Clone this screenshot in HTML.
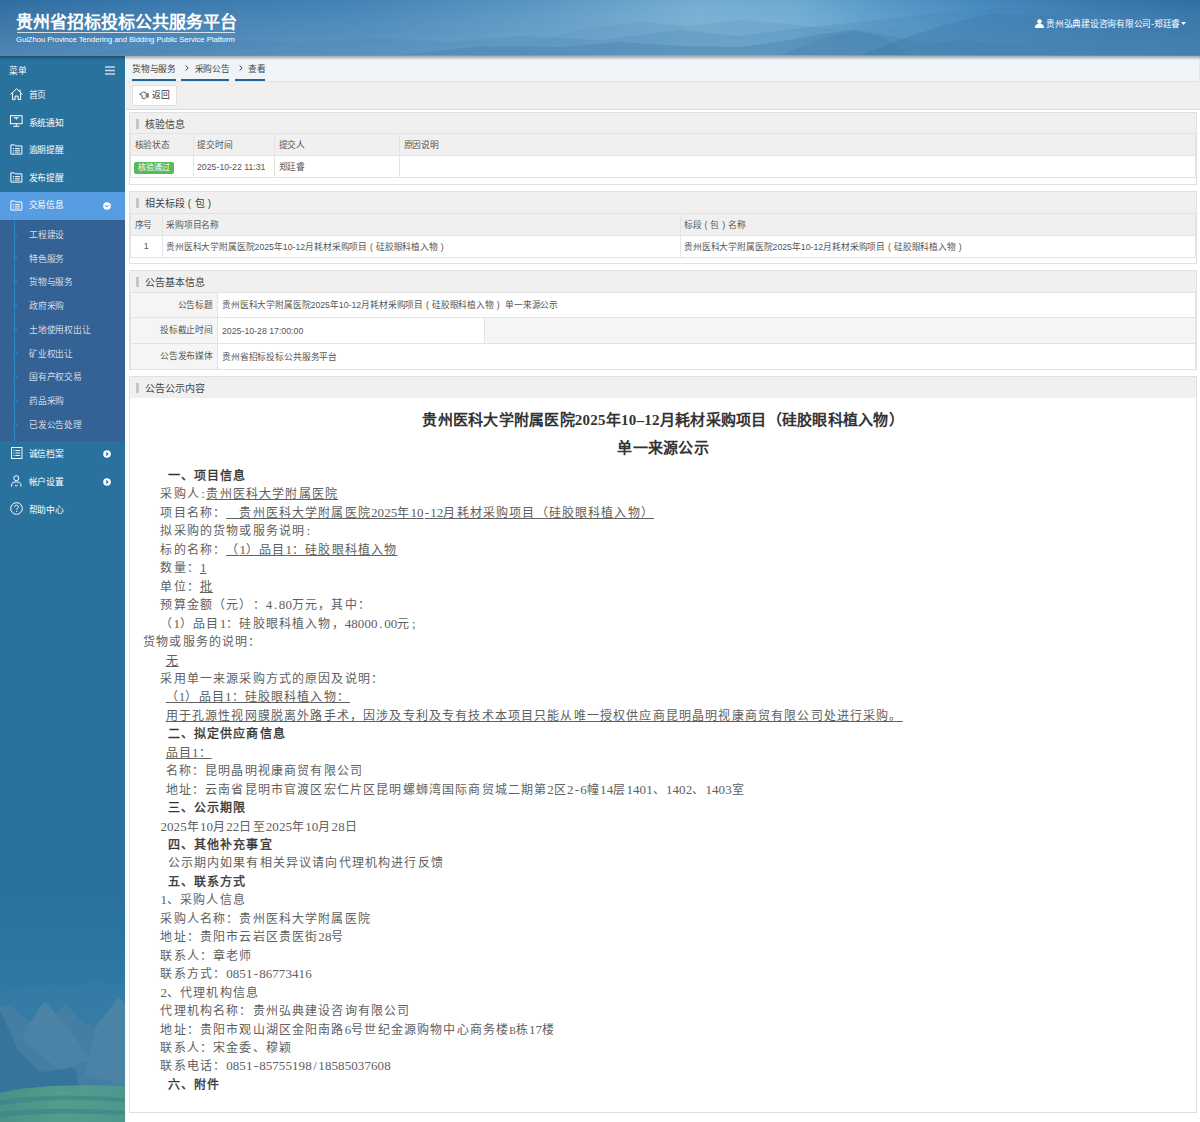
<!DOCTYPE html>
<html lang="zh-CN">
<head>
<meta charset="utf-8">
<style>
*{box-sizing:border-box;margin:0;padding:0}
html,body{width:1200px;height:1122px;overflow:hidden;background:#fff}
body{font-family:"Liberation Sans",sans-serif;font-size:8.75px;color:#333;position:relative;text-spacing-trim:space-all}
.a{position:absolute}
#hdr{left:0;top:0;width:1200px;height:56px;overflow:hidden;
 background:#3a7bb0;
 z-index:5}
#hsh{left:0;top:56px;width:1200px;height:3.5px;z-index:6;background:linear-gradient(180deg,rgba(0,0,0,.32),rgba(0,0,0,0))}
#title{left:15.5px;top:10.5px;color:#fff;font-size:17px;font-weight:bold;line-height:24px;white-space:nowrap}
#tline{left:17px;top:32px;width:218px;height:1px;background:rgba(255,255,255,.75)}
#sub{left:16px;top:34px;color:#fff;font-size:7.6px;line-height:11px;white-space:nowrap}
#user{left:1035px;top:18px;color:#fff;font-size:8.75px;letter-spacing:-.25px;line-height:13px;white-space:nowrap}
#side{left:0;top:55px;width:125px;height:1067px;background:#29729e;overflow:hidden}
.mt{position:absolute;left:28.7px;color:#fff;font-size:8.75px;letter-spacing:-.25px;line-height:11px;white-space:nowrap}
.st{position:absolute;left:29px;color:#d3dde8;font-size:8.75px;letter-spacing:-.25px;line-height:11px;white-space:nowrap}
.ic{position:absolute;left:10px}
#mainl{left:125px;top:55px;width:1px;height:1067px;background:#f7f9fb}
#crumb{left:126px;top:55px;width:1074px;height:27px;background:#eff4f8;border-bottom:1px solid #dfe4e8;border-right:1px solid #e4e8ec;border-radius:0 0 2px 0}
.cr{position:absolute;top:0;height:26px;border-bottom:2.2px solid #23679a;color:#444;font-size:8.75px;letter-spacing:-.25px;line-height:11px;padding-top:9px;white-space:nowrap}
#tool{left:126px;top:82px;width:1074px;height:28px;background:#f0f0f0;border-bottom:1px solid #dadada}
#back{left:132px;top:85px;width:45px;height:20.5px;background:#fff;border:1px solid #dedede;border-radius:2px;font-size:8.75px;line-height:11px}
.panel{position:absolute;left:129px;width:1068px;border:1px solid #e0e0e0;background:#fff}
.ph{height:20px;background:#f0f0f0;position:relative}
.ph i{position:absolute;left:6px;top:5.5px;width:3px;height:10px;background:#c6c6c6}
.ph b{position:absolute;left:14.5px;top:5.5px;font-weight:normal;font-size:10px;line-height:12px;color:#444;white-space:nowrap}
table{border-collapse:collapse;table-layout:fixed;width:100%}
td{border:1px solid #e3e3e3;height:22px;padding:1px 0 0 3.5px;font-size:8.75px;line-height:11px;color:#555;white-space:nowrap;overflow:hidden}
tr.h td{background:#f0f0f0}
.c{letter-spacing:-.15px}
.pp{display:inline-block;width:8.75px;text-align:center;letter-spacing:0}
.badge{display:inline-block;background:#5cb85c;color:#fff;border-radius:2px;width:40.5px;height:12.5px;line-height:12.5px;text-align:center;font-size:8px;letter-spacing:-.35px;vertical-align:middle;position:relative;top:1px;left:-.7px}
td.lab{background:#f5f5f5;text-align:right;padding:0 4px 0 0}
.at{position:absolute;left:129px;width:1068px;text-align:center;font-family:"Liberation Serif",serif;font-weight:bold;font-size:15px;line-height:20px;color:#333;white-space:nowrap;letter-spacing:.25px}
.ln{position:absolute;white-space:nowrap;font-size:12px;letter-spacing:1.16px;line-height:18px;color:#606060}
.ln .n{font-family:"Liberation Serif",serif;font-size:13px;letter-spacing:.08px}
.ln u{text-decoration:underline;text-underline-offset:1px;text-decoration-thickness:1px}
.ln.bd{color:#333;-webkit-text-stroke:.35px #333}
</style>
</head>
<body>
<div id="hdr" class="a">
<svg class="a" style="left:0;top:0" width="1200" height="56" viewBox="0 0 1200 56" preserveAspectRatio="none"><defs><linearGradient id="hg" x1="0" y1="0" x2="1" y2="0"><stop offset="0" stop-color="#2f6ca0"/><stop offset=".12" stop-color="#3777ac"/><stop offset=".3" stop-color="#4383b6"/><stop offset=".45" stop-color="#5a96c2"/><stop offset=".58" stop-color="#74acd0"/><stop offset=".66" stop-color="#6eaad0"/><stop offset=".73" stop-color="#5699c8"/><stop offset=".82" stop-color="#4387bd"/><stop offset=".92" stop-color="#3677ad"/><stop offset="1" stop-color="#2f6ea3"/></linearGradient><linearGradient id="hz" x1="0" y1="0" x2="0" y2="1"><stop offset="0" stop-color="#fff" stop-opacity="0"/><stop offset=".55" stop-color="#cfe3f0" stop-opacity=".12"/><stop offset="1" stop-color="#cfe3f0" stop-opacity=".22"/></linearGradient></defs><rect width="1200" height="56" fill="url(#hg)"/><rect width="1200" height="56" fill="url(#hz)"/><path d="M470 56 L530 42 L590 28 L640 22 L690 26 L740 20 L790 24 L840 30 L880 26 L930 34 L980 30 L1030 38 V56Z" fill="#5f94ba" opacity=".28"/><path d="M80 55 L160 44 L240 40 L300 43 L380 38 L450 42 L520 36 L600 40 L680 30 L740 36 L800 28 L860 22 L930 14 L1000 8 L1060 10 L1120 4 L1200 10 V55Z" fill="#3f7fb2" opacity=".22"/><path d="M400 55 L480 46 L560 47 L620 42 L680 46 L740 47 L790 40 L820 34 L855 30 L890 36 L930 44 L960 40 L1000 44 L1060 42 L1120 46 L1200 44 V55Z" fill="#4a84b0" opacity=".45"/><path d="M780 55 L830 36 L856 31 L880 36 L910 55Z" fill="#4d86b2" opacity=".55"/><path d="M860 55 L900 40 L940 26 L990 14 L1050 16 L1120 24 L1200 20 V55Z" fill="#3a78ad" opacity=".35"/></svg>
<div id="title" class="a">贵州省招标投标公共服务平台</div>
<div id="tline" class="a"></div>
<div id="sub" class="a">GuiZhou Province Tendering and Bidding Public Service Platform</div>
<div id="user" class="a"><svg width="9" height="9" viewBox="0 0 9 9" style="vertical-align:-1px"><circle cx="4.5" cy="2.6" r="2.3" fill="#fff"/><path d="M0 9 C0 5.5 2 4.8 4.5 4.8 C7 4.8 9 5.5 9 9Z" fill="#fff"/></svg> 贵州弘典建设咨询有限公司-郑廷睿<svg width="5" height="4" viewBox="0 0 5 4" style="vertical-align:1px;margin-left:1px"><path d="M0 0H5L2.5 3Z" fill="#fff"/></svg></div>
</div><div id="hsh" class="a"></div>
<div id="side" class="a">
<svg class="a" style="left:0;top:845px" width="125" height="222" viewBox="0 0 125 222"><defs><linearGradient id="sk" x1="0" y1="0" x2="0" y2="1"><stop offset="0" stop-color="#29729e"/><stop offset="1" stop-color="#3582ae"/></linearGradient><linearGradient id="gf" x1="0" y1="0" x2="1" y2="0"><stop offset="0" stop-color="#4a9286"/><stop offset=".5" stop-color="#53a08a"/><stop offset="1" stop-color="#4c9a8c"/></linearGradient></defs><rect width="125" height="222" fill="url(#sk)"/><path d="M0 92 L25 88 L50 84 L70 87 L95 82 L125 85 V222 H0Z" fill="#3a7ea6" opacity=".5"/><path d="M0 106 L11 106 L22 116 L30 122 L44.7 101 L56 114 L65.7 104 L80 120 L95 128 L118 98 L125 102 V222 H0Z" fill="#447fa3"/><path d="M44.7 101 L30 122 L22 140 L60 170 L90 160 L70 130Z" fill="#5a8fae" opacity=".3"/><path d="M118 98 L95 128 L85 175 L125 185 V102Z" fill="#5a8fae" opacity=".3"/><path d="M0 110 L18 150 L40 172 L75 168 L80 192 H0Z" fill="#2f7099" opacity=".7"/><path d="M0 193 Q40 183 125 186 V222 H0Z" fill="url(#gf)" opacity=".92"/><path d="M0 200 Q60 192 125 198 V202 Q60 197 0 205Z M0 212 Q50 206 125 211 V215 Q50 211 0 217Z" fill="#3b7f86" opacity=".55"/></svg>
<div class="mt" style="left:9.3px;top:10.5px">菜单</div>
<svg class="a" style="left:105px;top:11.0px" width="10" height="9" viewBox="0 0 10 9"><path d="M0 1H10M0 4.5H10M0 8H10" stroke="#c9d9e6" stroke-width="1.6"/></svg>
<div class="ic" style="top:33.2px"><svg width="14" height="13" viewBox="0 0 14 13"><path d="M0.6 6.4 L6.6 0.7 L12.6 6.4 M2.6 4.9 V11.6 H5.1 V8.1 H8.1 V11.6 H10.6 V4.9 M10 1.6 V3.9" fill="none" stroke="#fff" stroke-width="1"/></svg></div>
<div class="mt" style="top:34.9px">首页</div>
<div class="ic" style="top:60.3px"><svg width="13" height="12" viewBox="0 0 13 12"><rect x="0.5" y="0.7" width="11.6" height="8" fill="none" stroke="#fff" stroke-width="1"/><path d="M6.3 8.7 V10.8 M3.3 11.3 H9.3 M3.8 2.8 H8.8 M6.3 2.8 V4.6" fill="none" stroke="#fff" stroke-width="1"/></svg></div>
<div class="mt" style="top:62.5px">系统通知</div>
<div class="ic" style="top:89.3px"><svg width="13" height="11" viewBox="0 0 13 11"><path d="M0.9 0.9 H4.6 L5.5 1.9 H11.9 V10.1 H0.9 Z" fill="none" stroke="#fff" stroke-width="1"/><path d="M2.9 4.5 H3.9 M4.9 4.5 H9.9 M2.9 6.3 H3.9 M4.9 6.3 H9.9 M2.9 8.1 H3.9 M4.9 8.1 H9.9" stroke="#fff" stroke-width=".9"/></svg></div>
<div class="mt" style="top:90.1px">逾期提醒</div>
<div class="ic" style="top:116.9px"><svg width="13" height="11" viewBox="0 0 13 11"><path d="M0.9 0.9 H4.6 L5.5 1.9 H11.9 V10.1 H0.9 Z" fill="none" stroke="#fff" stroke-width="1"/><path d="M2.9 4.5 H3.9 M4.9 4.5 H9.9 M2.9 6.3 H3.9 M4.9 6.3 H9.9 M2.9 8.1 H3.9 M4.9 8.1 H9.9" stroke="#fff" stroke-width=".9"/></svg></div>
<div class="mt" style="top:117.7px">发布提醒</div>
<div class="a" style="left:0;top:137.0px;width:125px;height:27.6px;background:#579de2"></div>
<div class="ic" style="top:144.5px"><svg width="13" height="11" viewBox="0 0 13 11"><path d="M0.9 0.9 H4.6 L5.5 1.9 H11.9 V10.1 H0.9 Z" fill="none" stroke="#fff" stroke-width="1"/><path d="M2.9 4.5 H3.9 M4.9 4.5 H9.9 M2.9 6.3 H3.9 M4.9 6.3 H9.9 M2.9 8.1 H3.9 M4.9 8.1 H9.9" stroke="#fff" stroke-width=".9"/></svg></div>
<div class="mt" style="top:145.3px">交易信息</div>
<div class="a" style="left:103px;top:146.8px"><svg width="8" height="8" viewBox="0 0 8 8"><circle cx="4" cy="4" r="3.8" fill="#fff"/><path d="M2.4 3.2 L4 4.8 L5.6 3.2" fill="none" stroke="#2f74a8" stroke-width="1"/></svg></div>
<div class="a" style="left:0;top:164.6px;width:125px;height:221px;background:#346294"></div>
<div class="a" style="left:14px;top:164.6px;width:1px;height:221px;background:#2f86c8"></div>
<div class="a" style="left:12.5px;top:177.6px;width:4px;height:4px;border-radius:50%;border:1px solid #2f86c8;background:#346294"></div>
<div class="st" style="top:174.8px">工程建设</div>
<div class="a" style="left:12.5px;top:201.3px;width:4px;height:4px;border-radius:50%;border:1px solid #2f86c8;background:#346294"></div>
<div class="st" style="top:198.5px">特色服务</div>
<div class="a" style="left:12.5px;top:225.1px;width:4px;height:4px;border-radius:50%;border:1px solid #2f86c8;background:#346294"></div>
<div class="st" style="top:222.3px">货物与服务</div>
<div class="a" style="left:12.5px;top:248.9px;width:4px;height:4px;border-radius:50%;border:1px solid #2f86c8;background:#346294"></div>
<div class="st" style="top:246.1px">政府采购</div>
<div class="a" style="left:12.5px;top:272.6px;width:4px;height:4px;border-radius:50%;border:1px solid #2f86c8;background:#346294"></div>
<div class="st" style="top:269.8px">土地使用权出让</div>
<div class="a" style="left:12.5px;top:296.4px;width:4px;height:4px;border-radius:50%;border:1px solid #2f86c8;background:#346294"></div>
<div class="st" style="top:293.6px">矿业权出让</div>
<div class="a" style="left:12.5px;top:320.1px;width:4px;height:4px;border-radius:50%;border:1px solid #2f86c8;background:#346294"></div>
<div class="st" style="top:317.3px">国有产权交易</div>
<div class="a" style="left:12.5px;top:343.9px;width:4px;height:4px;border-radius:50%;border:1px solid #2f86c8;background:#346294"></div>
<div class="st" style="top:341.1px">药品采购</div>
<div class="a" style="left:12.5px;top:367.6px;width:4px;height:4px;border-radius:50%;border:1px solid #2f86c8;background:#346294"></div>
<div class="st" style="top:364.8px">已发公告处理</div>
<div class="ic" style="top:391.0px"><svg width="13" height="13" viewBox="0 0 13 13"><rect x="1.5" y="1.5" width="10.5" height="11" fill="none" stroke="#f0f4f8" stroke-width="1"/><path d="M3.3 4.5 H4.3 M5.3 4.5 H10.2 M3.3 7 H4.3 M5.3 7 H10.2 M3.3 9.5 H4.3 M5.3 9.5 H10.2" stroke="#f0f4f8" stroke-width="1"/></svg></div>
<div class="mt" style="top:394.4px">诚信档案</div>
<div class="a" style="left:102.7px;top:394.9px"><svg width="8" height="8" viewBox="0 0 8 8"><circle cx="4" cy="4" r="3.8" fill="#fff"/><path d="M3.2 2.4 L4.8 4 L3.2 5.6" fill="none" stroke="#2f74a8" stroke-width="1.35"/></svg></div>
<div class="ic" style="top:419.7px"><svg width="13" height="12" viewBox="0 0 13 12"><circle cx="6.3" cy="3.2" r="2.5" fill="none" stroke="#fff" stroke-width="1"/><path d="M1.6 11.5 V9.8 C1.6 7.8 3.5 6.9 6.3 6.9 C9.1 6.9 11 7.8 11 9.8 V11.5 M4.9 9.9 L6.3 11 L7.7 9.9" fill="none" stroke="#fff" stroke-width="1"/></svg></div>
<div class="mt" style="top:422.0px">帐户设置</div>
<div class="a" style="left:102.7px;top:422.5px"><svg width="8" height="8" viewBox="0 0 8 8"><circle cx="4" cy="4" r="3.8" fill="#fff"/><path d="M3.2 2.4 L4.8 4 L3.2 5.6" fill="none" stroke="#2f74a8" stroke-width="1.35"/></svg></div>
<div class="ic" style="top:447.3px"><svg width="13" height="13" viewBox="0 0 13 13"><circle cx="6.5" cy="6.5" r="5.8" fill="none" stroke="#fff" stroke-width="1"/><path d="M4.6 5 C4.6 3.8 5.4 3.2 6.5 3.2 C7.6 3.2 8.4 3.9 8.4 4.9 C8.4 6 6.6 6.3 6.6 7.6" fill="none" stroke="#fff" stroke-width="1"/><circle cx="6.6" cy="9.3" r=".6" fill="#fff"/></svg></div>
<div class="mt" style="top:449.6px">帮助中心</div>
</div>
<div id="mainl" class="a"></div>
<div id="crumb" class="a">
<div class="cr" style="left:6px;width:44px">货物与服务</div>
<div class="cr" style="left:55.3px;width:48px"><svg class="a" style="left:3.5px;top:10.3px" width="4" height="6" viewBox="0 0 4 6"><path d="M0.6 0.5 L3.2 3 L0.6 5.5" fill="none" stroke="#444" stroke-width="1"/></svg><span style="margin-left:13.3px">采购公告</span></div>
<div class="cr" style="left:109px;width:30px"><svg class="a" style="left:3.5px;top:10.3px" width="4" height="6" viewBox="0 0 4 6"><path d="M0.6 0.5 L3.2 3 L0.6 5.5" fill="none" stroke="#444" stroke-width="1"/></svg><span style="margin-left:13.3px">查看</span></div>
</div>
<div id="tool" class="a"></div>
<div id="back" class="a"><svg class="a" style="left:6.2px;top:5.4px" width="11" height="9" viewBox="0 0 11 9"><path d="M0.7 3.3 L3.3 1.5 Q4.6 0.6 6 1.3 L7.2 2 V6.5 L5.7 7.6 H4 Q3 7.4 3.1 6.2 V4.4 L0.7 3.3Z" fill="none" stroke="#555" stroke-width="1"/><rect x="8.3" y="2.2" width="1.3" height="4.4" fill="#444"/></svg><span class="a" style="left:18.5px;top:4px">返回</span></div>
<div class="panel" style="top:112.0px;height:73.0px"><div class="ph" style="height:20px"><i></i><b>核验信息</b></div><table><colgroup><col style="width:62.5px"><col style="width:81.5px"><col style="width:125px"><col></colgroup><tr class="h"><td><span class="c">核验状态</span></td><td><span class="c">提交时间</span></td><td><span class="c">提交人</span></td><td><span class="c">原因说明</span></td></tr><tr><td><span class="badge"><span class="c">核验通过</span></span></td><td>2025-10-22 11:31</td><td><span class="c">郑廷睿</span></td><td></td></tr></table></div>
<div class="panel" style="top:191.0px;height:73.0px"><div class="ph" style="height:21px"><i></i><b>相关标段<span class="pp" style="width:10px">(</span>包<span class="pp" style="width:10px">)</span></b></div><table><colgroup><col style="width:31.5px"><col style="width:518px"><col></colgroup><tr class="h"><td><span class="c">序号</span></td><td><span class="c">采购项目名称</span></td><td><span class="c">标段<span class="pp">(</span>包<span class="pp">)</span>名称</span></td></tr><tr><td style="text-align:center;padding:0">1</td><td><span class="c">贵州医科大学附属医院</span>2025<span class="c">年</span>10-12<span class="c">月耗材采购项目<span class="pp">(</span>硅胶眼科植入物<span class="pp">)</span></span></td><td><span class="c">贵州医科大学附属医院</span>2025<span class="c">年</span>10-12<span class="c">月耗材采购项目<span class="pp">(</span>硅胶眼科植入物<span class="pp">)</span></span></td></tr></table></div>
<div class="panel" style="top:270.0px;height:100.0px"><div class="ph" style="height:21px"><i></i><b>公告基本信息</b></div><table style="margin-top:0"><colgroup><col style="width:87px"><col style="width:267px"><col></colgroup><tr><td class="lab" style="height:25px"><span class="c">公告标题</span></td><td colspan="2" style="height:25px;padding-left:4px"><span class="c">贵州医科大学附属医院</span>2025<span class="c">年</span>10-12<span class="c">月耗材采购项目<span class="pp">(</span>硅胶眼科植入物<span class="pp">)</span></span> <span class="c">单一来源公示</span></td></tr><tr><td class="lab" style="height:26px"><span class="c">投标截止时间</span></td><td style="height:26px;padding-left:4px">2025-10-28 17:00:00</td><td class="lab" style="height:26px"></td></tr><tr><td class="lab" style="height:26px"><span class="c">公告发布媒体</span></td><td colspan="2" style="height:26px;padding-left:4px"><span class="c">贵州省招标投标公共服务平台</span></td></tr></table></div>
<div class="panel" style="top:376.0px;height:737.0px"><div class="ph" style="height:21px"><i></i><b>公告公示内容</b></div></div>
<div class="at" style="top:410px">贵州医科大学附属医院2025年10–12月耗材采购项目（硅胶眼科植入物）</div>
<div class="at" style="top:438px">单一来源公示</div>
<div class="ln bd" style="left:167.5px;top:467.00px">一、项目信息</div>
<div class="ln" style="left:160.4px;top:485.45px">采购人<span class="n" style="padding-left:1.48px;letter-spacing:1.48px">:</span><u>贵州医科大学附属医院</u></div>
<div class="ln" style="left:160.4px;top:503.90px">项目名称：<u>　贵州医科大学附属医院<span class="n">2025</span>年<span class="n">10</span><span class="n" style="padding-left:1.13px;letter-spacing:1.13px">-</span><span class="n">12</span>月耗材采购项目（硅胶眼科植入物）</u></div>
<div class="ln" style="left:160.4px;top:522.35px">拟采购的货物或服务说明<span class="n" style="padding-left:1.48px;letter-spacing:1.48px">:</span></div>
<div class="ln" style="left:160.4px;top:540.80px">标的名称：<u>（<span class="n">1</span>）品目<span class="n">1</span>：硅胶眼科植入物</u></div>
<div class="ln" style="left:160.4px;top:559.25px">数量：<u><span class="n">1</span></u></div>
<div class="ln" style="left:160.4px;top:577.70px">单位：<u>批</u></div>
<div class="ln" style="left:160.4px;top:596.15px">预算金额（元）：<span class="n">4</span><span class="n" style="padding-left:1.67px;letter-spacing:1.67px">.</span><span class="n">80</span>万元，其中：</div>
<div class="ln" style="left:160.4px;top:614.60px">（<span class="n">1</span>）品目<span class="n">1</span>：硅胶眼科植入物，<span class="n">48000</span><span class="n" style="padding-left:1.67px;letter-spacing:1.67px">.</span><span class="n">00</span>元<span class="n" style="padding-left:1.48px;letter-spacing:1.48px">;</span></div>
<div class="ln" style="left:143.1px;top:633.05px">货物或服务的说明：</div>
<div class="ln" style="left:165.7px;top:651.50px"><u>无</u></div>
<div class="ln" style="left:160.4px;top:669.95px">采用单一来源采购方式的原因及说明：</div>
<div class="ln" style="left:165.7px;top:688.40px"><u>（<span class="n">1</span>）品目<span class="n">1</span>：硅胶眼科植入物：</u></div>
<div class="ln" style="left:165.7px;top:706.85px"><u>用于孔源性视网膜脱离外路手术，因涉及专利及专有技术本项目只能从唯一授权供应商昆明晶明视康商贸有限公司处进行采购。</u></div>
<div class="ln bd" style="left:167.5px;top:725.30px">二、拟定供应商信息</div>
<div class="ln" style="left:165.7px;top:743.75px"><u>品目<span class="n">1</span>：</u></div>
<div class="ln" style="left:165.7px;top:762.20px">名称：昆明晶明视康商贸有限公司</div>
<div class="ln" style="left:165.7px;top:780.65px">地址：云南省昆明市官渡区宏仁片区昆明螺蛳湾国际商贸城二期第<span class="n">2</span>区<span class="n">2</span><span class="n" style="padding-left:1.13px;letter-spacing:1.13px">-</span><span class="n">6</span>幢<span class="n">14</span>层<span class="n">1401</span>、<span class="n">1402</span>、<span class="n">1403</span>室</div>
<div class="ln bd" style="left:167.5px;top:799.10px">三、公示期限</div>
<div class="ln" style="left:160.4px;top:817.55px"><span class="n">2025</span>年<span class="n">10</span>月<span class="n">22</span>日至<span class="n">2025</span>年<span class="n">10</span>月<span class="n">28</span>日</div>
<div class="ln bd" style="left:167.5px;top:836.00px">四、其他补充事宜</div>
<div class="ln" style="left:167.5px;top:854.45px">公示期内如果有相关异议请向代理机构进行反馈</div>
<div class="ln bd" style="left:167.5px;top:872.90px">五、联系方式</div>
<div class="ln" style="left:160.4px;top:891.35px"><span class="n">1</span>、采购人信息</div>
<div class="ln" style="left:160.4px;top:909.80px">采购人名称：贵州医科大学附属医院</div>
<div class="ln" style="left:160.4px;top:928.25px">地址：贵阳市云岩区贵医街<span class="n">28</span>号</div>
<div class="ln" style="left:160.4px;top:946.70px">联系人：章老师</div>
<div class="ln" style="left:160.4px;top:965.15px">联系方式：<span class="n">0851</span><span class="n" style="padding-left:1.13px;letter-spacing:1.13px">-</span><span class="n">86773416</span></div>
<div class="ln" style="left:160.4px;top:983.60px"><span class="n">2</span>、代理机构信息</div>
<div class="ln" style="left:160.4px;top:1002.05px">代理机构名称：贵州弘典建设咨询有限公司</div>
<div class="ln" style="left:160.4px;top:1020.50px">地址：贵阳市观山湖区金阳南路<span class="n">6</span>号世纪金源购物中心商务楼<span class="n" style="font-size:10px;letter-spacing:-.09px">B</span>栋<span class="n">17</span>楼</div>
<div class="ln" style="left:160.4px;top:1038.95px">联系人：宋金委、穆颖</div>
<div class="ln" style="left:160.4px;top:1057.40px">联系电话：<span class="n">0851</span><span class="n" style="padding-left:1.13px;letter-spacing:1.13px">-</span><span class="n">85755198</span><span class="n" style="padding-left:1.48px;letter-spacing:1.48px">/</span><span class="n">18585037608</span></div>
<div class="ln bd" style="left:167.5px;top:1075.85px">六、附件</div>
</body>
</html>
